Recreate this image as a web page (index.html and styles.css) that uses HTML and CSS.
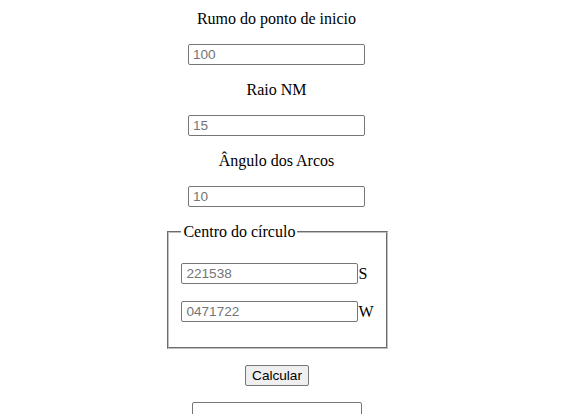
FILE: index.html
```html
<!DOCTYPE html>
<html lang="pt">
<head>
<meta charset="utf-8">
<title>Calculo de arcos</title>
<link rel="stylesheet" href="styles.css">
</head>
<body>
<form class="form">
  <label class="label" for="rumo">Rumo do ponto de inicio</label>
  <input class="field" id="rumo" type="text" placeholder="100">
  <label class="label" for="raio">Raio NM</label>
  <input class="field" id="raio" type="text" placeholder="15">
  <label class="label" for="angulo">Ângulo dos Arcos</label>
  <input class="field" id="angulo" type="text" placeholder="10">
  <fieldset class="center">
    <legend class="legend">Centro do círculo</legend>
    <div class="coord"><input class="field" type="text" placeholder="221538"><span class="hemi">S</span></div>
    <div class="coord second"><input class="field" type="text" placeholder="0471722"><span class="hemi">W</span></div>
  </fieldset>
  <button class="btn" type="button">Calcular</button>
  <input class="result" type="text">
</form>
</body>
</html>
```
FILE: styles.css
```css
html, body {
  margin: 0;
  background: #fff;
}
body {
  padding: 8px;
  font-family: "Liberation Serif", "Times New Roman", serif;
  font-size: 16px;
  color: #000;
}
.form {
  width: 537px;
  display: flex;
  flex-direction: column;
  align-items: center;
}
.label {
  display: block;
  line-height: 22px;
  height: 22px;
  margin-bottom: 14px;
}
.field {
  box-sizing: border-box;
  width: 177px;
  height: 21px;
  margin: 0 0 14px;
  padding: 1px 2px 1px 4px;
  border: 1px solid #767676;
  border-radius: 2px;
  font-family: "Liberation Sans", Arial, sans-serif;
  font-size: 13.6px;
  color: #000;
  background: #fff;
}
.field::placeholder {
  color: #757575;
}
.center {
  box-sizing: border-box;
  width: 219px;
  margin: 2px 0 0 2px;
  padding: 0 12px 25px;
  border: 2px groove #c0c0c0;
  display: flex;
  flex-direction: column;
  align-items: flex-start;
}
.legend {
  padding: 0 2px;
  line-height: 18px;
}
.coord {
  display: flex;
  align-items: center;
  margin-top: 22px;
  line-height: 18px;
}
.coord.second {
  margin-top: 17px;
}
.coord .field {
  margin: 0;
}
.hemi {
  font-size: 16px;
}
.btn {
  box-sizing: border-box;
  margin-top: 16px;
  margin-left: 1px;
  width: 64px;
  height: 21px;
  padding: 0 6px;
  font-family: "Liberation Sans", Arial, sans-serif;
  font-size: 13.6px;
  color: #000;
  background: #efefef;
  border: 1px solid #767676;
  border-radius: 2px;
}
.result {
  box-sizing: border-box;
  margin-top: 16px;
  margin-left: 1px;
  width: 170px;
  height: 21px;
  border: 1px solid #767676;
  border-radius: 2px;
  background: #fff;
}
```
